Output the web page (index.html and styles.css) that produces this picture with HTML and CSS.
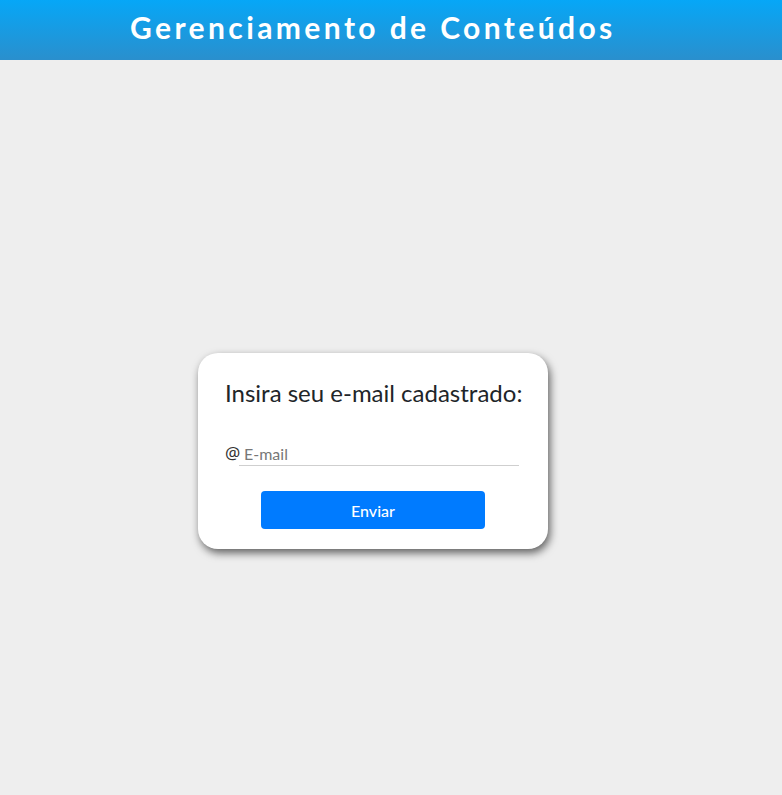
FILE: index.html
```html
<!DOCTYPE html>
<html lang="pt-BR">
<head>
<meta charset="utf-8">
<title>Gerenciamento de Conteúdos</title>
<link rel="stylesheet" href="styles.css">
</head>
<body>
<header class="topbar">
  <h1 class="topbar-title">Gerenciamento de Conteúdos</h1>
</header>
<main class="page">
  <form class="card">
    <h2 class="card-title">Insira seu e-mail cadastrado:</h2>
    <div class="field">
      <span class="field-icon">@</span>
      <input class="field-input" type="email" placeholder="E-mail">
    </div>
    <div class="actions">
      <button class="btn" type="button">Enviar</button>
    </div>
  </form>
</main>
</body>
</html>
```
FILE: styles.css
```css
* { box-sizing: border-box; }
html, body { height: 100%; }
body {
  margin: 0;
  background: #eeeeee;
  font-family: Lato, "Noto Sans", sans-serif;
  color: #212529;
  overflow: hidden;
}
.topbar {
  height: 60px;
  background: linear-gradient(to bottom, #06a7f7 0%, #2a8fcd 100%);
  display: flex;
  align-items: center;
  padding-left: 130px;
}
.topbar-title {
  margin: 0;
  color: #ffffff;
  font-size: 30px;
  font-weight: 700;
  letter-spacing: 3.4px;
  line-height: 1;
  margin-top: -6px;
}
.page {
  padding-top: 293px;
  padding-left: 198px;
}
.card {
  width: 350px;
  height: 196px;
  background: #ffffff;
  border-radius: 20px;
  box-shadow: 2px 4px 8px rgba(0, 0, 0, 0.6);
  padding: 26px 27px 0 27px;
  display: flex;
  flex-direction: column;
}
.card-title {
  margin: 0;
  font-size: 24px;
  font-weight: 400;
  line-height: 28px;
  color: #212529;
  white-space: nowrap;
}
.field {
  margin-top: 36px;
  display: flex;
  align-items: flex-end;
  padding-right: 2px;
}
.field-icon {
  font-family: "Noto Sans", sans-serif;
  font-size: 17px;
  line-height: 20px;
  color: #333;
  width: 14px;
  padding-bottom: 3px;
}
.field-input {
  flex: 1;
  border: 0;
  border-bottom: 1px solid #cfcfcf;
  outline: none;
  background: transparent;
  font-family: Lato, sans-serif;
  font-size: 16px;
  padding: 0 0 2px 5px;
  height: 22px;
  color: #333;
}
.field-input::placeholder { color: #777777; }
.actions {
  margin-top: 25px;
  display: flex;
  justify-content: center;
}
.btn {
  width: 224px;
  height: 38px;
  border: 0;
  border-radius: 4px;
  background: #007bff;
  color: #ffffff;
  font-family: Lato, sans-serif;
  font-size: 16px;
  font-weight: 500;
}
```
